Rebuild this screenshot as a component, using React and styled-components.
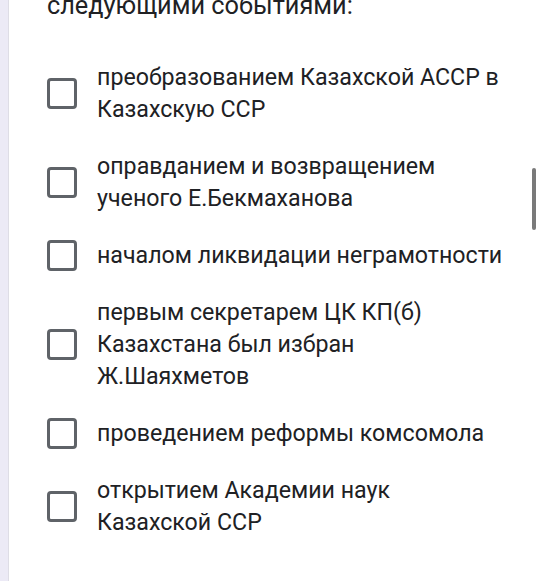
import React from "react";
import styled, { createGlobalStyle } from "styled-components";

const GlobalStyle = createGlobalStyle`
  html, body {
    margin: 0;
    padding: 0;
    background: #ffffff;
  }
  body {
    font-family: Roboto, "Noto Sans", Arial, sans-serif;
    color: #202124;
    overflow: hidden;
  }
`;

const options = [
  ["преобразованием Казахской АССР в", "Казахскую ССР"],
  ["оправданием и возвращением", "ученого Е.Бекмаханова"],
  ["началом ликвидации неграмотности"],
  ["первым секретарем ЦК КП(б)", "Казахстана был избран", "Ж.Шаяхметов"],
  ["проведением реформы комсомола"],
  ["открытием Академии наук", "Казахской ССР"],
];

function App() {
  return (
    <>
      <GlobalStyle />
      <Screen>
        <SideStrip />
        <Card>
          <Question>следующими событиями:</Question>
          <OptionList>
            {options.map((lines, i) => (
              <Option key={i}>
                <CheckBox />
                <Label>
                  {lines.map((line, j) => (
                    <div key={j}>{line}</div>
                  ))}
                </Label>
              </Option>
            ))}
          </OptionList>
        </Card>
        <ScrollThumb />
      </Screen>
    </>
  );
}

const Screen = styled.div`
  position: relative;
  display: flex;
  width: 540px;
  height: 581px;
  overflow: hidden;
`;

const SideStrip = styled.div`
  width: 8px;
  flex-shrink: 0;
  background-color: #eceaf6;
  border-right: 1px solid #dedde6;
`;

const Card = styled.div`
  flex: 1;
  padding-left: 38px;
`;

const Question = styled.div`
  margin-top: -10px;
  font-size: 25.3px;
  line-height: 32px;
  color: #202124;
`;

const OptionList = styled.div`
  display: flex;
  flex-direction: column;
  gap: 25px;
  margin-top: 39px;
`;

const Option = styled.div`
  display: flex;
  align-items: center;
`;

const CheckBox = styled.div`
  width: 24px;
  height: 25px;
  flex-shrink: 0;
  border: 3px solid #5f6368;
  border-radius: 4px;
`;

const Label = styled.div`
  margin-left: 20px;
  font-size: 23.2px;
  line-height: 32px;
  color: #202124;
`;

const ScrollThumb = styled.div`
  position: absolute;
  right: 4px;
  top: 168px;
  width: 4px;
  height: 62px;
  border-radius: 2px;
  background-color: #7a7a7a;
`;

export default App;
